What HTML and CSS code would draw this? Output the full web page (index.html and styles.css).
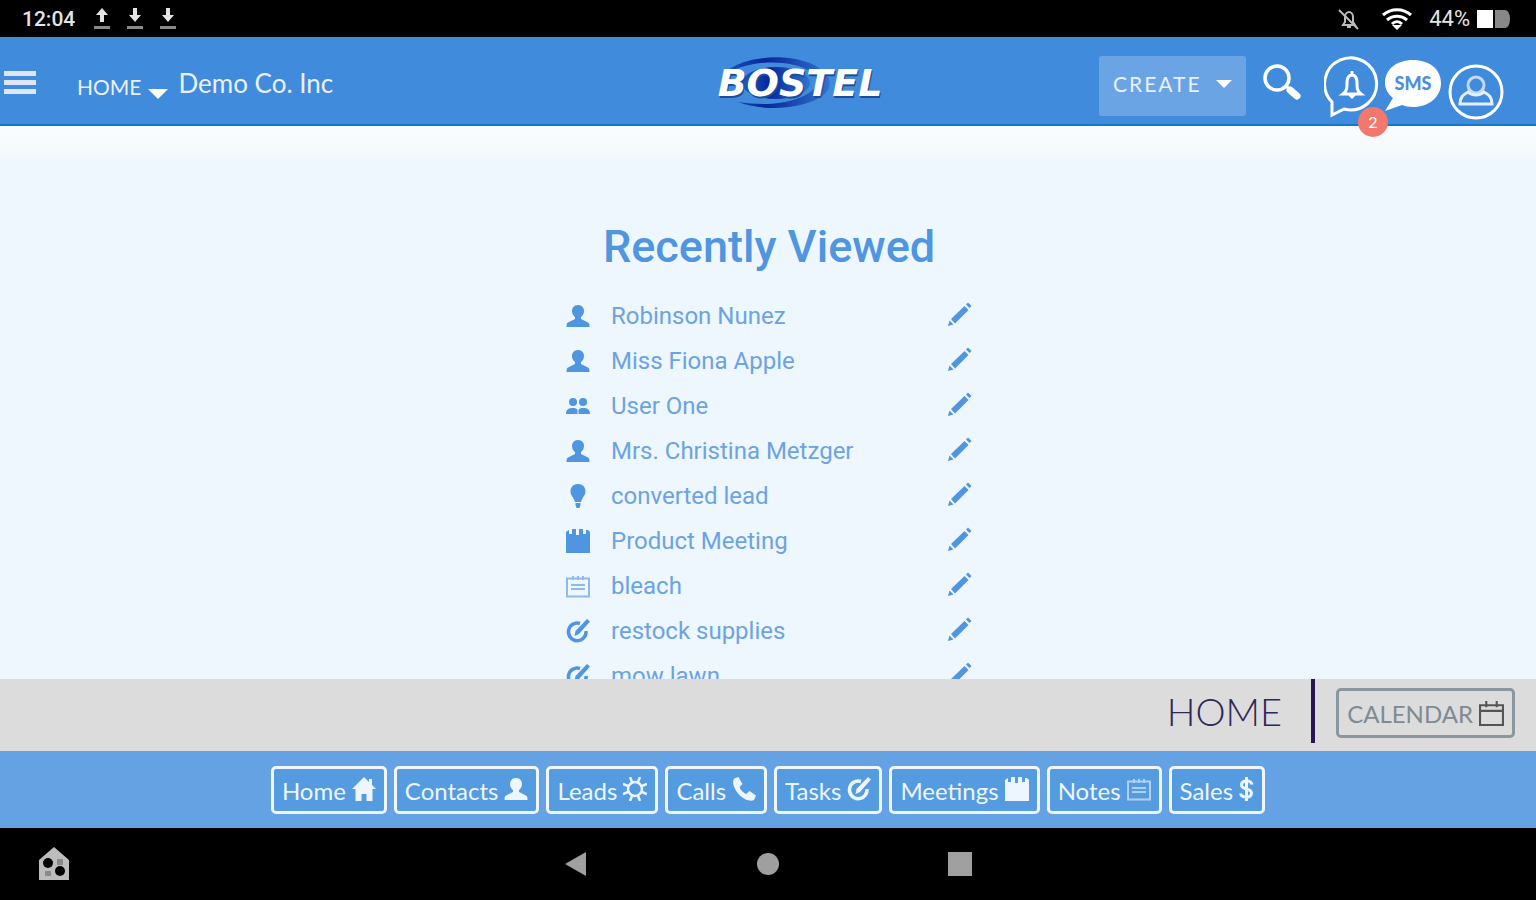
FILE: index.html
```html
<!DOCTYPE html>
<html lang="en">
<head>
    <meta charset="UTF-8">
    <meta name="viewport" content="width=device-width, initial-scale=1.0">
    <title>Bostel - Home</title>
    <link rel="stylesheet" href="styles.css">
</head>
<body>
    <!-- shared icons -->
    <svg class="sprite" aria-hidden="true">
        <symbol id="person" viewBox="0 0 24 24">
            <path d="M12 1c-4 0-6 3-6 6 0 3 1.500 5 3 6v2L2 18.500c-1 .6-1.500 1.500-1.500 4.500h23c0-3-.5-3.900-1.500-4.500L15 15v-2c1.500-1 3-3 3-6 0-3-2-6-6-6z"/>
        </symbol>
        <symbol id="people" viewBox="0 0 24 24">
            <circle cx="7" cy="8" r="4"/>
            <circle cx="17" cy="8" r="4"/>
            <path d="M0 20c0-5 3-6 7-6 2 0 4 .5 4.500 2v4zM12.500 20v-4c.5-1.500 2.500-2 4.500-2 4 0 7 1 7 6z"/>
        </symbol>
        <symbol id="bulb" viewBox="0 0 24 24">
            <path d="M12 0C7.500 0 4.500 3 4.500 7.500c0 4 3.500 6 4.500 10.500h6c1-4.500 4.500-6.500 4.500-10.500C19.500 3 16.500 0 12 0zM9.500 19h5v2l-1 3h-3l-1-3z"/>
        </symbol>
        <symbol id="meeting" viewBox="0 0 24 24">
            <path d="M0 8V3l3-2v4h3V0h4v6h3V0h4v5h3V1h2l2 2v21H0z"/>
        </symbol>
        <symbol id="note" viewBox="0 0 24 24">
            <path d="M1 4.500h22v18H1zM5 11h14M5 15h14M7 2v4M12 2v4M17 2v4" fill="none" stroke="currentColor" stroke-width="2"/>
        </symbol>
        <symbol id="task" viewBox="0 0 24 24">
            <path d="M14 4.500A8.800 8.800 0 1 0 20 12" fill="none" stroke="currentColor" stroke-width="3.500"/>
            <path d="M8.500 17l1-5L21 0l3 2.500L13 15z"/>
        </symbol>
        <symbol id="pencil" viewBox="0 0 24 24">
            <path d="M0 24l1.500-5.500 4 4zM3 17L16.500 4l4 4L7 21.500zM18 2.500L20 .5l3.500 3.500-2 2z"/>
        </symbol>
        <symbol id="house" viewBox="0 0 24 24">
            <path d="M12 0L0 12h3.500v12h6v-7h5v7h6V12H24l-4-4V2h-3v3z"/>
        </symbol>
        <symbol id="gear" viewBox="0 0 24 24">
            <circle cx="12" cy="12" r="7" fill="none" stroke="currentColor" stroke-width="2.500"/>
            <path d="M9 5L7 0M15 5l2-5M9 19l-2 5M15 19l2 5M5 9L0 7M5 15l-5 2M19 9l5-2M19 15l5 2" fill="none" stroke="currentColor" stroke-width="2.500"/>
        </symbol>
        <symbol id="phone" viewBox="0 0 24 24">
            <path d="M2 1.500L6.500 0l4 7-3 3c1 3 3.500 5.500 6.500 7l3.500-3L24 18.500 22 23c-3 1.500-9 .5-14-4.500S-.5 6 2 1.500z"/>
        </symbol>
        <symbol id="dollar" viewBox="0 0 14 24">
            <path d="M12.500 7.500C12 5 10 4 7 4S2 5.500 2 8c0 5 10 3 10 8 0 2.500-2 4-5 4s-5.500-1-6-3.500M7 0v24" fill="none" stroke="currentColor" stroke-width="3"/>
        </symbol>
        <symbol id="calendar" viewBox="0 0 24 24">
            <path d="M1 4h22v19H1zM1 9.500h22M7 0v6M17 0v6" fill="none" stroke="currentColor" stroke-width="2"/>
        </symbol>
        <symbol id="upload" viewBox="0 0 16 22">
            <path d="M8 0l6 7h-4v7H6V7H2z"/>
            <path d="M0 18h16v3H0z" opacity="0.6"/>
        </symbol>
        <symbol id="download" viewBox="0 0 16 22">
            <path d="M6 0h4v7h4l-6 7-6-7h4z"/>
            <path d="M0 18h16v3H0z" opacity="0.6"/>
        </symbol>
    </svg>

    <div class="status-bar">
        <div class="status-group">
            <span class="clock">12:04</span>
            <svg class="transfer"><use href="#upload"/></svg>
            <svg class="transfer"><use href="#download"/></svg>
            <svg class="transfer"><use href="#download"/></svg>
        </div>
        <div class="status-group status-right">
            <svg class="muted" viewBox="0 0 22 22">
                <path d="M5 17h12l-2-3V9c0-3-2-5-4-5S7 6 7 9v5zM9 19h4M1 2l19 19" fill="none" stroke="#bbb" stroke-width="2"/>
            </svg>
            <svg class="wifi" viewBox="0 0 30 22">
                <path d="M1 7c8-7 20-7 28 0M5 12c6-5 14-5 20 0M10 16c3-3 7-3 10 0" fill="none" stroke="#fff" stroke-width="3"/>
                <path d="M10 17h10l-5 5z" fill="#fff"/>
            </svg>
            <span class="percent">44%</span>
            <svg class="battery" viewBox="0 0 33 18">
                <path d="M0 0h16v18H0z" fill="#fff"/>
                <path d="M18 0h10c3 0 5 4 5 9s-2 9-5 9H18z" fill="#888"/>
            </svg>
        </div>
    </div>

    <header class="header">
        <div class="header-left">
            <button class="icon-button menu-button" aria-label="Menu"><span></span><span></span><span></span></button>
            <button class="icon-button home-menu">HOME <span class="caret"></span></button>
            <a class="company" href="#">Demo Co. Inc</a>
        </div>
        <a class="logo" href="#" aria-label="Bostel">
            <svg viewBox="0 0 176 56">
                <defs>
                    <linearGradient id="ring">
                        <stop offset="0" stop-color="#1c5bc0"/>
                        <stop offset="0.4" stop-color="#08279a"/>
                        <stop offset="1" stop-color="#2f74cf"/>
                    </linearGradient>
                </defs>
                <path d="M10 22C22 2 72-4 102 10c26 14 18 32-10 39-22 6-48 5-66-2 20 3 42 3 58-3 22-7 28-20 12-29C76 4 34 4 10 22z" fill="url(#ring)"/>
                <ellipse cx="64" cy="28" rx="34" ry="16" fill="url(#ring)"/>
                <text x="89" y="43" text-anchor="middle" class="logo-shadow">BOSTEL</text>
                <text x="88" y="41" text-anchor="middle" class="logo-text">BOSTEL</text>
            </svg>
        </a>
        <div class="header-right">
            <button class="create-button">CREATE <span class="caret caret-small"></span></button>
            <button class="icon-button search-button" aria-label="Search">
                <svg viewBox="0 0 38 36">
                    <circle cx="14" cy="14" r="12" fill="none" stroke="#fff" stroke-width="3.500"/>
                    <path d="M23 22l4 4" stroke="#fff" stroke-width="3"/>
                    <path d="M27 26l7 6" stroke="#fff" stroke-width="7" stroke-linecap="round"/>
                </svg>
            </button>
            <button class="icon-button bell-button" aria-label="Notifications">
                <svg viewBox="0 0 56 62">
                    <path d="M8 46A26 26 0 1 1 20 53L8 59z" fill="none" stroke="#fff" stroke-width="3"/>
                    <path d="M19 38c4-3 4-6 4-11 0-5 2-8 5-8s5 3 5 8c0 5 0 8 4 11zM28 15v4" fill="none" stroke="#fff" stroke-width="3"/>
                    <path d="M24 39h8l-4 4z" fill="#fff"/>
                </svg>
                <span class="badge">2</span>
            </button>
            <button class="icon-button sms-button" aria-label="SMS">
                <svg viewBox="0 0 58 54">
                    <path d="M29 1c16 0 28 9 28 23S45 48 29 48c-5 0-8-1-11-2L1 52l8-13C4 35 1 30 1 24 1 10 13 1 29 1z" fill="#fff"/>
                    <text x="29" y="31" text-anchor="middle">SMS</text>
                </svg>
            </button>
            <button class="icon-button user-button" aria-label="Account">
                <svg viewBox="0 0 56 56">
                    <circle cx="28" cy="28" r="26" fill="none" stroke="#fff" stroke-width="3"/>
                    <circle cx="28" cy="21" r="8" fill="none" stroke="#c3d9f6" stroke-width="3"/>
                    <path d="M20 28c-5 3-8 5-8 12h32c0-7-3-9-8-12-4 4-12 4-16 0z" fill="none" stroke="#e4effb" stroke-width="3"/>
                </svg>
            </button>
        </div>
    </header>

    <main class="content">
        <h1>Recently Viewed</h1>
        <ul class="recent">
            <li><svg><use href="#person"/></svg><a href="#">Robinson Nunez</a><button class="icon-button edit" aria-label="Edit"><svg><use href="#pencil"/></svg></button></li>
            <li><svg><use href="#person"/></svg><a href="#">Miss Fiona Apple</a><button class="icon-button edit" aria-label="Edit"><svg><use href="#pencil"/></svg></button></li>
            <li><svg><use href="#people"/></svg><a href="#">User One</a><button class="icon-button edit" aria-label="Edit"><svg><use href="#pencil"/></svg></button></li>
            <li><svg><use href="#person"/></svg><a href="#">Mrs. Christina Metzger</a><button class="icon-button edit" aria-label="Edit"><svg><use href="#pencil"/></svg></button></li>
            <li><svg><use href="#bulb"/></svg><a href="#">converted lead</a><button class="icon-button edit" aria-label="Edit"><svg><use href="#pencil"/></svg></button></li>
            <li><svg><use href="#meeting"/></svg><a href="#">Product Meeting</a><button class="icon-button edit" aria-label="Edit"><svg><use href="#pencil"/></svg></button></li>
            <li><svg class="faded"><use href="#note"/></svg><a href="#">bleach</a><button class="icon-button edit" aria-label="Edit"><svg><use href="#pencil"/></svg></button></li>
            <li><svg><use href="#task"/></svg><a href="#">restock supplies</a><button class="icon-button edit" aria-label="Edit"><svg><use href="#pencil"/></svg></button></li>
            <li><svg><use href="#task"/></svg><a href="#">mow lawn</a><button class="icon-button edit" aria-label="Edit"><svg><use href="#pencil"/></svg></button></li>
        </ul>
    </main>

    <div class="page-bar">
        <h2>HOME</h2>
        <button class="calendar-button">CALENDAR <svg><use href="#calendar"/></svg></button>
    </div>

    <nav class="modules">
        <a href="#">Home <svg><use href="#house"/></svg></a>
        <a href="#">Contacts <svg><use href="#person"/></svg></a>
        <a href="#">Leads <svg><use href="#gear"/></svg></a>
        <a href="#">Calls <svg><use href="#phone"/></svg></a>
        <a href="#">Tasks <svg><use href="#task"/></svg></a>
        <a href="#">Meetings <svg><use href="#meeting"/></svg></a>
        <a href="#">Notes <svg class="faded"><use href="#note"/></svg></a>
        <a href="#">Sales <svg class="dollar"><use href="#dollar"/></svg></a>
    </nav>

    <div class="system-bar">
        <button class="icon-button" aria-label="Smart home">
            <svg class="smart-home" viewBox="0 0 32 34">
                <path d="M16 0l15 13v20H1V13z" fill="#bdbdbd"/>
                <circle cx="10" cy="16" r="5"/>
                <circle cx="22" cy="24" r="5"/>
                <path d="M19 12h6v6h-6zM7 24h6v5H7z" fill="#8a8a8a"/>
            </svg>
        </button>
        <div class="system-buttons">
            <button class="icon-button" aria-label="Back"><svg viewBox="0 0 24 24"><path d="M1 12L22 0v24z"/></svg></button>
            <button class="icon-button" aria-label="Home screen"><svg viewBox="0 0 24 24"><circle cx="12" cy="12" r="11"/></svg></button>
            <button class="icon-button" aria-label="Recent apps"><svg viewBox="0 0 24 24"><path d="M0 0h24v24H0z"/></svg></button>
        </div>
    </div>
</body>
</html>
```
FILE: styles.css
```css
* {
    box-sizing: border-box;
}

body {
    margin: 0;
    height: 100vh;
    display: flex;
    flex-direction: column;
    overflow: hidden;
    background-color: #eef6fe;
    font-family: Lato, sans-serif;
}

a {
    color: inherit;
    text-decoration: none;
}

svg {
    display: block;
    fill: currentColor;
}

.sprite {
    display: none;
}

.icon-button {
    padding: 0;
    border: none;
    background: none;
    color: inherit;
    font-family: inherit;
    cursor: pointer;
}

/* Status bar */
.status-bar {
    flex: none;
    height: 37px;
    padding: 0 26px 0 22px;
    display: flex;
    justify-content: space-between;
    background-color: #000;
    color: #e4e4e4;
    font-family: Roboto, sans-serif;
}

.status-group {
    display: flex;
    align-items: center;
    gap: 17px;
}

.clock {
    margin-right: 2px;
    font-size: 21px;
    font-weight: 500;
}

.transfer {
    width: 16px;
    height: 22px;
}

.status-right {
    gap: 7px;
}

.muted {
    width: 22px;
    height: 22px;
    margin-right: 15px;
}

.wifi {
    width: 30px;
    height: 22px;
    margin-right: 10px;
}

.percent {
    font-size: 22px;
}

.battery {
    width: 33px;
    height: 18px;
}

/* Header */
.header {
    flex: none;
    height: 89px;
    padding: 4px 32px 0 4px;
    display: grid;
    grid-template-columns: 1fr auto 1fr;
    align-items: center;
    background-color: #408bdc;
    border-bottom: 2px solid #1179d2;
    color: #e9f1fc;
}

.header-left,
.header-right {
    display: flex;
    align-items: center;
}

.menu-button {
    width: 32px;
    margin-right: 41px;
    display: grid;
    gap: 4px;
}

.menu-button span {
    height: 5px;
    background-color: #dfe6fa;
}

.home-menu {
    padding-top: 8px;
    display: flex;
    gap: 7px;
    font-size: 21px;
}

.caret {
    align-self: flex-end;
    border: 10px solid transparent;
    border-top-color: #fff;
    border-bottom: 0;
}

.company {
    margin-left: 10px;
    font-size: 26px;
}

.logo {
    margin-left: 92px;
}

.logo svg {
    width: 176px;
    height: 56px;
}

.logo text {
    font-family: "DejaVu Sans", sans-serif;
    font-size: 38px;
    font-style: italic;
    font-weight: bold;
}

.logo-text {
    fill: #fff;
}

.logo-shadow {
    fill: #1d4d96;
}

.header-right {
    padding-top: 6px;
    justify-content: flex-end;
}

.create-button {
    width: 147px;
    height: 60px;
    margin-right: 17px;
    padding: 0 14px 4px;
    border: none;
    border-radius: 3px;
    display: flex;
    align-items: center;
    justify-content: space-between;
    background-color: #6ba4e4;
    color: #e9f1fc;
    font-family: inherit;
    font-size: 21px;
    letter-spacing: 2px;
    cursor: pointer;
}

.caret-small {
    align-self: center;
    border-width: 8px;
    border-bottom: 0;
}

.search-button {
    padding-bottom: 8px;
}

.search-button svg {
    width: 38px;
    height: 36px;
}

.bell-button {
    position: relative;
    margin-left: 23px;
    padding-top: 2px;
}

.bell-button svg {
    width: 56px;
    height: 62px;
}

.badge {
    position: absolute;
    right: -8px;
    bottom: -19px;
    width: 30px;
    height: 30px;
    border-radius: 50%;
    background-color: #f2776c;
    color: #fff;
    font-size: 16px;
    line-height: 30px;
}

.sms-button {
    margin-left: 4px;
}

.sms-button svg {
    width: 58px;
    height: 54px;
}

.sms-button text {
    fill: #4a8fdc;
    font-size: 18px;
    font-weight: 900;
}

.user-button {
    margin-left: 6px;
    padding-top: 12px;
}

.user-button svg {
    width: 56px;
    height: 56px;
}

/* Recently viewed */
.content {
    flex: 1;
    min-height: 0;
    padding: 91px 0 0 2px;
    overflow: hidden;
    background: linear-gradient(#fafcfd, #f6fafd 24px, #eef6fe 38px);
    color: #4f95df;
    font-family: Roboto, sans-serif;
}

h1 {
    margin: 0 0 16px;
    font-size: 45px;
    font-weight: 500;
    line-height: 60px;
    text-align: center;
}

.recent {
    width: 408px;
    margin: 0 auto;
    padding: 0;
    list-style: none;
}

.recent li {
    height: 45px;
    display: flex;
    align-items: center;
}

.recent svg {
    width: 26px;
    height: 24px;
}

.recent a {
    flex: 1;
    margin-left: 20px;
    color: #6ca3e2;
    font-size: 24px;
}

.edit {
    padding-bottom: 4px;
}

.faded {
    opacity: 0.6;
}

/* Page title bar */
.page-bar {
    flex: none;
    height: 72px;
    padding-right: 21px;
    display: flex;
    justify-content: flex-end;
    align-items: flex-start;
    background-color: #dcdcdc;
}

h2 {
    margin: 0 21px 0 0;
    padding-right: 29px;
    border-right: 4px solid #281556;
    color: #32265a;
    font-size: 38px;
    font-weight: 300;
    line-height: 64px;
}

.calendar-button {
    height: 50px;
    margin-top: 9px;
    padding: 0 8px;
    border: 3px solid #8b979f;
    border-radius: 5px;
    display: flex;
    align-items: center;
    gap: 6px;
    background: none;
    color: #7e8b93;
    font-family: inherit;
    font-size: 24px;
    cursor: pointer;
}

.calendar-button svg {
    width: 25px;
    height: 25px;
    color: #555;
}

/* Module links */
.modules {
    flex: none;
    height: 77px;
    display: flex;
    align-items: center;
    justify-content: center;
    gap: 7px;
    background-color: #65a2e3;
}

.modules a {
    height: 48px;
    padding: 2px 8px 0;
    border: 3px solid #f0f6fe;
    border-radius: 5px;
    display: flex;
    align-items: center;
    gap: 6px;
    background-color: #559bdf;
    color: #edf5fe;
    font-size: 24px;
}

.modules svg {
    width: 24px;
    height: 28px;
    padding-bottom: 4px;
}

.modules .dollar {
    width: 15px;
}

/* Android buttons */
.system-bar {
    flex: none;
    height: 72px;
    padding: 0 38px;
    display: grid;
    grid-template-columns: 1fr auto 1fr;
    align-items: center;
    justify-items: start;
    background-color: #000;
}

.smart-home {
    width: 32px;
    height: 34px;
    fill: #000;
}

.system-buttons {
    display: grid;
    grid-template-columns: repeat(3, 192px);
    justify-items: center;
    color: #a0a0a0;
}

.system-buttons svg {
    width: 24px;
    height: 24px;
}
```
